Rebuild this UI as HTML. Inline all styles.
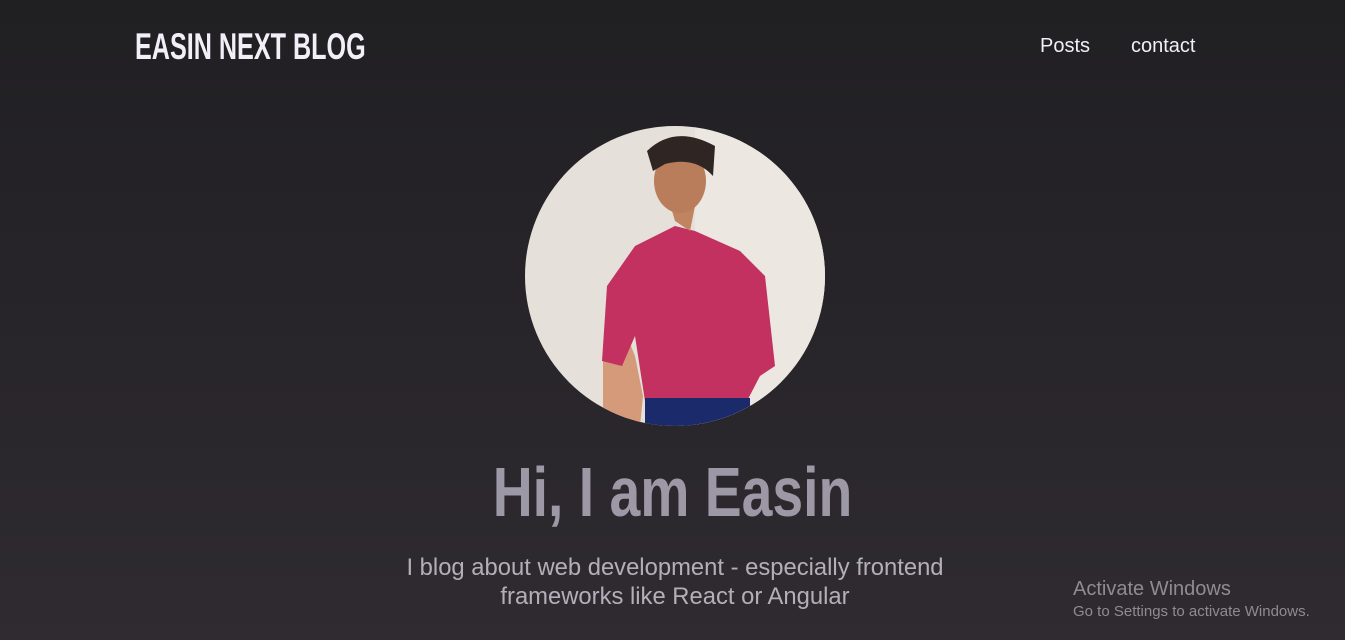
<!DOCTYPE html>
<html><head><meta charset="utf-8"><style>
*{margin:0;padding:0;box-sizing:border-box}
body{width:1345px;height:640px;overflow:hidden;background:linear-gradient(#201f22,#2f2b31);font-family:"Liberation Sans",sans-serif;position:relative}
.logo{position:absolute;left:135px;top:26px;font-weight:bold;font-size:37px;color:#f3eff9;transform:scaleX(0.68);transform-origin:left;white-space:nowrap}
.nav{position:absolute;top:35px;font-size:20px;color:#f1eef5}
h1{position:absolute;left:0;width:1345px;top:452px;text-align:center;font-weight:bold;font-size:70px;color:#9c98a5;transform:scaleX(0.79)}
p{position:absolute;left:0;width:1350px;top:553px;text-align:center;font-size:23.8px;line-height:29px;color:#b3afb9}
.aw{position:absolute;left:1073px;top:578px;color:#8e8b93;font-size:20px}
.aw2{position:absolute;left:1073px;top:603px;color:#8e8b93;font-size:15px}
</style></head><body>
<div class="logo">EASIN NEXT BLOG</div>
<div class="nav" style="left:1040px">Posts</div>
<div class="nav" style="left:1131px">contact</div>
<svg style="position:absolute;left:525px;top:126px" width="300" height="300" viewBox="0 0 300 300">
<defs><clipPath id="c"><circle cx="150" cy="150" r="150"/></clipPath></defs>
<g clip-path="url(#c)">
<rect width="300" height="300" fill="#e5e1da"/>
<rect x="170" width="130" height="300" fill="#ece8e1"/>
<path d="M115 300 L118 270 L110 230 L98 200 L78 230 L78 330 Z" fill="#d49a7a"/>
<path d="M110 120 L150 100 L170 105 L215 125 L240 150 L250 240 L235 250 L222 275 L120 275 L110 210 L97 240 L77 235 L82 160 Z" fill="#c2315f"/>
<rect x="120" y="272" width="105" height="40" fill="#1b2a6a"/>
<path d="M150 95 L145 78 L158 72 L170 80 L165 105 Z" fill="#c08460"/>
<ellipse cx="155" cy="55" rx="26" ry="32" fill="#b97d5c"/>
<path d="M122 25 Q150 -2 190 20 L188 50 Q170 30 140 38 L128 45 Z" fill="#2f2624"/>
</g></svg>
<h1>Hi, I am Easin</h1>
<p>I blog about web development - especially frontend<br>frameworks like React or Angular</p>
<div class="aw">Activate Windows</div>
<div class="aw2">Go to Settings to activate Windows.</div>
</body></html>
